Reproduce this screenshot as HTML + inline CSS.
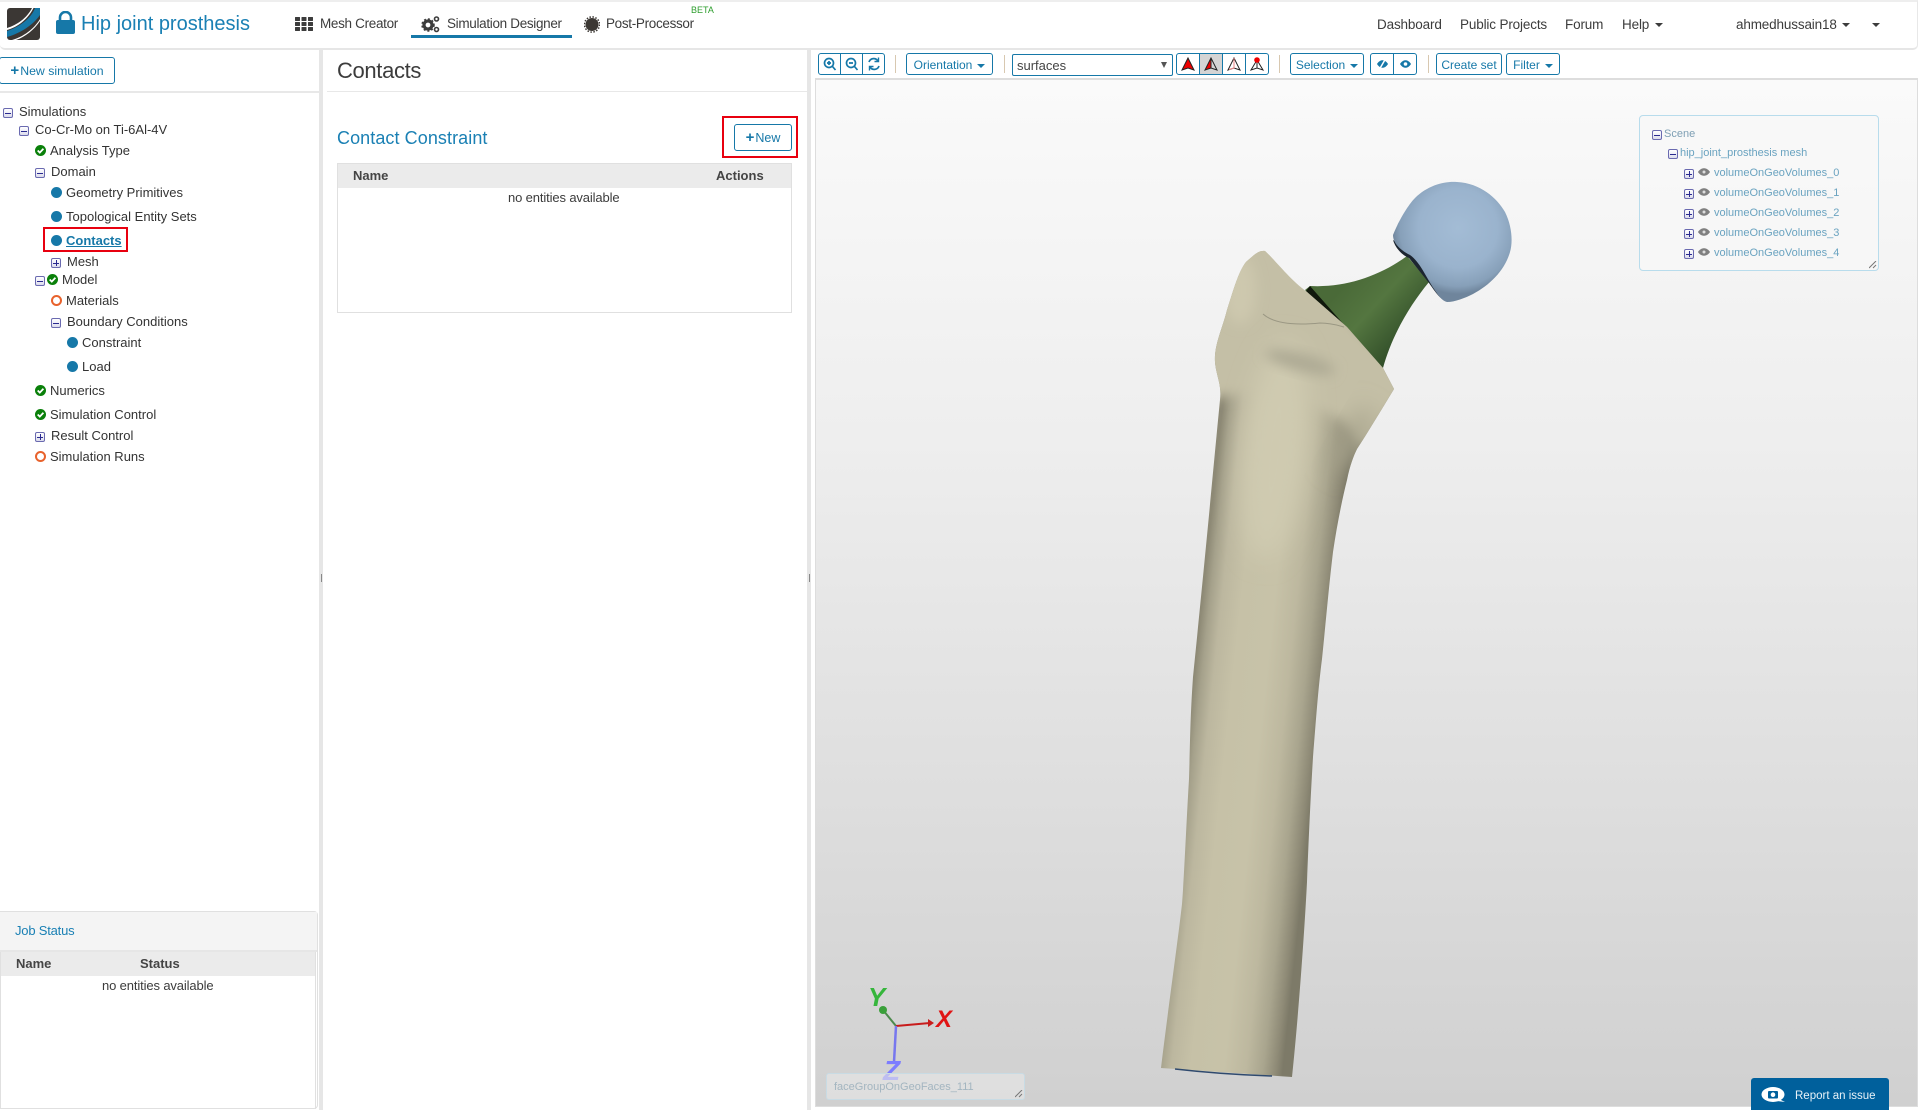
<!DOCTYPE html>
<html><head><meta charset="utf-8"><title>Hip joint prosthesis</title>
<style>
html,body{margin:0;padding:0;width:1919px;height:1110px;overflow:hidden;background:#fff;font-family:"Liberation Sans",sans-serif;color:#333}
.a{position:absolute}
.t{position:absolute;white-space:nowrap;line-height:16px;font-size:13px;color:#333}
.l{font-size:13.5px;letter-spacing:-.15px;color:#3c3c3c}
.n{letter-spacing:-.32px}
.exp{position:absolute;width:8px;height:8px;border:1px solid #6a6ab0;border-radius:2px;background:linear-gradient(#fff,#dcdcec)}
.exp:before{content:"";position:absolute;left:1px;right:1px;top:3.5px;height:1px;background:#2a2a90}
.exp.p:after{content:"";position:absolute;top:1px;bottom:1px;left:3.5px;width:1px;background:#2a2a90}
.blue{position:absolute;width:11px;height:11px;border-radius:50%;background:#1678a8}
.ring{position:absolute;width:7px;height:7px;border-radius:50%;border:2px solid #e8622c}
.chk{position:absolute;width:11px;height:11px}
.btn{position:absolute;box-sizing:border-box;border:1px solid #1678a8;border-radius:3px;background:#fff;color:#1678a8;font-size:12px;line-height:22px;text-align:center;white-space:nowrap}
.cell{position:absolute;top:0;bottom:0;border-right:1px solid #1678a8;box-sizing:border-box}
.sep{position:absolute;width:1px;top:55px;height:18px;background:#d8c8b0}
.caret{display:inline-block;width:0;height:0;border-left:4px solid transparent;border-right:4px solid transparent;border-top:4px solid currentColor;vertical-align:middle;margin-left:5px}
.s{position:absolute;white-space:nowrap;font-size:11px;line-height:14px;color:#6aa3c0}
</style></head><body>

<!-- header -->
<div class="a" style="left:0;top:0;width:1917px;height:46px;border:1px solid #e8e8e8;border-left:none;border-top:2px solid #eee;border-bottom:2px solid #e6e6e6;border-radius:0 0 5px 5px;background:#fff"></div>
<svg class="a" style="left:7px;top:8px" width="33" height="32" viewBox="0 0 33 32">
<rect width="33" height="32" rx="3" fill="#3b3734"/>
<path d="M0 23C12 19 24 11 28 0H33V7C26 17 14 25 0 29Z" fill="#1678a8"/>
<path d="M0 20C10 17 20 10 25 0H26.500C21 11 11 19 0 22Z" fill="#fff"/>
<path d="M5 32C16 29 27 21 33 11V13C27 22 18 29 9 32Z" fill="#fff"/>
</svg>
<svg class="a" style="left:56px;top:11px" width="19" height="23" viewBox="0 0 19 23"><path d="M4 10V6.500a5.500 5.500 0 0 1 11 0V10" fill="none" stroke="#1678a8" stroke-width="2.600"/><rect x="0" y="9" width="19" height="14" rx="2" fill="#1678a8"/></svg>
<div class="t" style="left:81px;top:13px;font-size:20px;line-height:22px;color:#1a80b4;letter-spacing:0">Hip joint prosthesis</div>
<svg class="a" style="left:295px;top:17px" width="18" height="14" fill="#3c3c3c"><rect width="5" height="4" rx=".5"/><rect x="6.500" width="5" height="4" rx=".5"/><rect x="13" width="5" height="4" rx=".5"/><rect y="5" width="5" height="4" rx=".5"/><rect x="6.500" y="5" width="5" height="4" rx=".5"/><rect x="13" y="5" width="5" height="4" rx=".5"/><rect y="10" width="5" height="4" rx=".5"/><rect x="6.500" y="10" width="5" height="4" rx=".5"/><rect x="13" y="10" width="5" height="4" rx=".5"/></svg>
<div class="t l n" style="left:320px;top:16px">Mesh Creator</div>
<svg class="a" style="left:421px;top:15px" width="19" height="18" fill="none" stroke="#3c3c3c"><circle cx="7" cy="10" r="4" stroke-width="3.200"/><circle cx="7" cy="10" r="6" stroke-width="1.500" stroke-dasharray="2 2"/><circle cx="15.500" cy="4" r="2" stroke-width="1.600"/><circle cx="15.500" cy="14.500" r="2" stroke-width="1.600"/></svg>
<div class="t l n" style="left:447px;top:16px">Simulation Designer</div>
<div class="a" style="left:411px;top:35px;width:161px;height:3px;background:#1678a8"></div>
<svg class="a" style="left:584px;top:16px" width="16" height="17"><circle cx="8" cy="8.500" r="6.500" fill="#3c3834"/><circle cx="8" cy="8.500" r="7.600" fill="none" stroke="#3c3834" stroke-width="1.500" stroke-dasharray="1.500 1.500"/></svg>
<div class="t l n" style="left:606px;top:16px">Post-Processor</div>
<div class="t" style="left:691px;top:2px;font-size:9px;color:#2e9e2e">BETA</div>

<div class="t l" style="left:1377px;top:17px">Dashboard</div>
<div class="t l" style="left:1460px;top:17px">Public Projects</div>
<div class="t l" style="left:1565px;top:17px">Forum</div>
<div class="t l" style="left:1622px;top:17px">Help <span class="caret" style="margin-left:2px"></span></div>
<div class="t l" style="left:1736px;top:17px">ahmedhussain18 <span class="caret" style="margin-left:2px"></span></div>
<div class="t l" style="left:1872px;top:17px"><span class="caret" style="margin-left:0"></span></div>

<!-- left panel -->
<div class="a" style="left:319px;top:50px;width:4px;height:1060px;background:#e6e6e6"></div>
<div class="a" style="left:321px;top:574px;width:1px;height:8px;background:#888"></div>
<div class="a" style="left:807px;top:50px;width:4px;height:1060px;background:#e6e6e6"></div>
<div class="a" style="left:809px;top:574px;width:1px;height:8px;background:#888"></div>
<div class="btn" style="left:-1px;top:57px;width:116px;height:27px;line-height:25px"><b style="font-size:15px;margin-right:1px">+</b><span style="font-size:12.300px">New simulation</span></div>
<div class="a" style="left:0;top:91px;width:319px;height:2px;background:#e8e8e8"></div>

<div class="exp" style="left:3px;top:108px"></div><div class="t" style="left:19px;top:104px">Simulations</div>
<div class="exp" style="left:19px;top:126px"></div><div class="t" style="left:35px;top:122px">Co-Cr-Mo on Ti-6Al-4V</div>
<svg class="chk" style="left:35px;top:145px" viewBox="0 0 11 11"><circle cx="5.500" cy="5.500" r="5.500" fill="#0a800a"/><path d="M2.700 5.500L4.800 7.600L8.400 3.800" fill="none" stroke="#fff" stroke-width="1.800"/></svg><div class="t" style="left:50px;top:143px">Analysis Type</div>
<div class="exp" style="left:35px;top:168px"></div><div class="t" style="left:51px;top:164px">Domain</div>
<div class="blue" style="left:51px;top:187px"></div><div class="t" style="left:66px;top:185px">Geometry Primitives</div>
<div class="blue" style="left:51px;top:211px"></div><div class="t" style="left:66px;top:209px">Topological Entity Sets</div>
<div class="blue" style="left:51px;top:235px"></div><div class="t" style="left:66px;top:233px;font-weight:bold;color:#1678a8;text-decoration:underline">Contacts</div>
<div class="exp p" style="left:51px;top:258px"></div><div class="t" style="left:67px;top:254px">Mesh</div>
<div class="exp" style="left:35px;top:276px"></div><svg class="chk" style="left:47px;top:274px" viewBox="0 0 11 11"><circle cx="5.500" cy="5.500" r="5.500" fill="#0a800a"/><path d="M2.700 5.500L4.800 7.600L8.400 3.800" fill="none" stroke="#fff" stroke-width="1.800"/></svg><div class="t" style="left:62px;top:272px">Model</div>
<div class="ring" style="left:51px;top:295px"></div><div class="t" style="left:66px;top:293px">Materials</div>
<div class="exp" style="left:51px;top:318px"></div><div class="t" style="left:67px;top:314px">Boundary Conditions</div>
<div class="blue" style="left:67px;top:337px"></div><div class="t" style="left:82px;top:335px">Constraint</div>
<div class="blue" style="left:67px;top:361px"></div><div class="t" style="left:82px;top:359px">Load</div>
<svg class="chk" style="left:35px;top:385px" viewBox="0 0 11 11"><circle cx="5.500" cy="5.500" r="5.500" fill="#0a800a"/><path d="M2.700 5.500L4.800 7.600L8.400 3.800" fill="none" stroke="#fff" stroke-width="1.800"/></svg><div class="t" style="left:50px;top:383px">Numerics</div>
<svg class="chk" style="left:35px;top:409px" viewBox="0 0 11 11"><circle cx="5.500" cy="5.500" r="5.500" fill="#0a800a"/><path d="M2.700 5.500L4.800 7.600L8.400 3.800" fill="none" stroke="#fff" stroke-width="1.800"/></svg><div class="t" style="left:50px;top:407px">Simulation Control</div>
<div class="exp p" style="left:35px;top:432px"></div><div class="t" style="left:51px;top:428px">Result Control</div>
<div class="ring" style="left:35px;top:451px"></div><div class="t" style="left:50px;top:449px">Simulation Runs</div>
<div class="a" style="left:43px;top:227px;width:81px;height:21px;border:2px solid #e8000f"></div>

<!-- job status -->
<div class="a" style="left:0;top:911px;width:318px;height:198px;border:1px solid #e0e0e0;border-left:none;border-radius:0 4px 4px 0;box-sizing:border-box;background:#fff"></div>
<div class="a" style="left:0;top:912px;width:317px;height:38px;background:#f4f4f4;border-bottom:2px solid #e6e6e6"></div>
<div class="t" style="left:15px;top:923px;font-size:13px;letter-spacing:-.2px;color:#1a80b4">Job Status</div>
<div class="a" style="left:1px;top:952px;width:314px;height:24px;background:#ebebeb"></div>
<div class="a" style="left:315px;top:952px;width:1px;height:157px;background:#e0e0e0"></div>
<div class="a" style="left:0;top:952px;width:1px;height:157px;background:#e0e0e0"></div>
<div class="t" style="left:16px;top:956px;font-weight:bold;color:#444">Name</div>
<div class="t" style="left:140px;top:956px;font-weight:bold;color:#444">Status</div>
<div class="t" style="left:102px;top:978px;font-size:13px;letter-spacing:-.13px;color:#3c3c3c">no entities available</div>

<!-- center panel -->
<div class="t" style="left:337px;top:58px;font-size:22px;line-height:26px;letter-spacing:-.35px;color:#3c3c3c">Contacts</div>
<div class="a" style="left:327px;top:91px;width:480px;height:1px;background:#e8e8e8"></div>
<div class="t" style="left:337px;top:127px;font-size:18px;line-height:22px;letter-spacing:.08px;color:#1a80b4">Contact Constraint</div>
<div class="a" style="left:722px;top:116px;width:72px;height:38px;border:2px solid #e8000f"></div>
<div class="btn" style="left:734px;top:124px;width:58px;height:27px;line-height:25px"><b style="font-size:15px;margin-right:1px">+</b><span style="font-size:12.500px">New</span></div>
<div class="a" style="left:337px;top:163px;width:453px;height:148px;border:1px solid #e0e0e0"></div>
<div class="a" style="left:338px;top:164px;width:453px;height:24px;background:#ebebeb"></div>
<div class="t" style="left:353px;top:168px;font-weight:bold;color:#444">Name</div>
<div class="t" style="left:716px;top:168px;font-weight:bold;color:#444">Actions</div>
<div class="t" style="left:508px;top:190px;font-size:13px;letter-spacing:-.13px;color:#3c3c3c">no entities available</div>

<!-- toolbar -->
<div class="btn" style="left:818px;top:53px;width:67px;height:22px">
<div class="cell" style="left:0;width:22px"></div><div class="cell" style="left:22px;width:22px"></div>
<svg class="a" style="left:0;top:0" width="65" height="20" fill="none" stroke="#1678a8" stroke-width="1.700"><circle cx="10" cy="9" r="4.500"/><path d="M13.500 12.500L16.500 16M8 9H12M10 7V11M30 9H34"/><circle cx="32" cy="9" r="4.500"/><path d="M35.500 12.500L38.500 16M50 8A5 5 0 0 1 59 7M60 12A5 5 0 0 1 51 13"/><path d="M59.500 3.500V7.500H55.500M50.500 16.500V12.500H54.500" stroke-width="1.400"/></svg></div>
<div class="sep" style="left:895px"></div>
<div class="btn" style="left:906px;top:53px;width:87px;height:22px">Orientation<span class="caret"></span></div>
<div class="sep" style="left:1004px"></div>
<div class="a" style="left:1012px;top:54px;width:159px;height:20px;border:1px solid #1678a8;border-radius:2px;font-size:13px;line-height:21px;text-indent:4px;color:#444">surfaces<span class="a" style="right:5px;top:7px;border-left:3.500px solid transparent;border-right:3.500px solid transparent;border-top:6px solid #555"></span></div>
<div class="btn" style="left:1176px;top:53px;width:93px;height:22px;overflow:hidden">
<div class="cell" style="left:0;width:23px"></div><div class="cell" style="left:23px;width:23px;background:#d4d4d4"></div><div class="cell" style="left:46px;width:23px"></div>
<svg class="a" style="left:0;top:0" width="91" height="20"><path d="M11 4L5 16L11 14L17 16Z" fill="#e00" stroke="#222"/><path d="M34 4L28 16L34 14Z" fill="#e00"/><path d="M34 4L28 16L34 14L40 16ZM34 4V14" fill="none" stroke="#222"/><path d="M57 4L51 16L57 14L63 16ZM57 4V14" fill="none" stroke="#222"/><path d="M57 4V14L52 15.500" fill="none" stroke="#e88" /><path d="M80 6L74 16L80 14L86 16ZM80 6V14" fill="none" stroke="#222"/><circle cx="80" cy="6" r="2.800" fill="#e00"/></svg></div>
<div class="sep" style="left:1279px"></div>
<div class="btn" style="left:1290px;top:53px;width:74px;height:22px">Selection<span class="caret"></span></div>
<div class="btn" style="left:1370px;top:53px;width:47px;height:22px"><div class="cell" style="left:0;width:23px"></div>
<svg class="a" style="left:0;top:0" width="45" height="20"><path d="M6 10C9 5 14 5 17 10C14 15 9 15 6 10Z" fill="#1678a8"/><path d="M8 16L15 4" stroke="#fff" stroke-width="1.500"/><path d="M29 10C32 5 37 5 40 10C37 15 32 15 29 10Z" fill="#1678a8"/><circle cx="34.500" cy="10" r="1.800" fill="#fff"/></svg></div>
<div class="sep" style="left:1428px"></div>
<div class="btn" style="left:1436px;top:53px;width:66px;height:22px">Create set</div>
<div class="btn" style="left:1506px;top:53px;width:54px;height:22px">Filter<span class="caret"></span></div>

<!-- viewer -->
<div class="a" style="left:815px;top:78px;width:1103px;height:1029px;box-sizing:border-box;border:1px solid #ddd;border-top:2px solid #ddd;background:linear-gradient(#fafafa 0%,#eeeeee 35%,#d0d0d0 100%)"></div>

<svg class="a" style="left:0;top:0" width="1919" height="1110" viewBox="0 0 1919 1110">
<defs>
<linearGradient id="sh" gradientUnits="userSpaceOnUse" x1="1188" y1="729" x2="1318" y2="743">
<stop offset="0" stop-color="#8d8975"/><stop offset=".06" stop-color="#a5a18b"/><stop offset=".15" stop-color="#bcb79f"/><stop offset=".3" stop-color="#c6c1a7"/><stop offset=".55" stop-color="#c7c2a8"/><stop offset=".72" stop-color="#bdb89f"/><stop offset=".85" stop-color="#a9a58e"/><stop offset=".95" stop-color="#8e8a76"/><stop offset="1" stop-color="#7d7a68"/>
</linearGradient>
<radialGradient id="ball" gradientUnits="userSpaceOnUse" cx="1458" cy="228" r="66">
<stop offset="0" stop-color="#a3bcd5"/><stop offset=".6" stop-color="#9ab3cd"/><stop offset=".88" stop-color="#87a0b9"/><stop offset="1" stop-color="#6f859c"/>
</radialGradient>
<linearGradient id="neck" gradientUnits="userSpaceOnUse" x1="1340" y1="290" x2="1400" y2="345">
<stop offset="0" stop-color="#4a6a38"/><stop offset=".45" stop-color="#547640"/><stop offset="1" stop-color="#33502a"/>
</linearGradient>
<filter id="b12" x="-50%" y="-50%" width="200%" height="200%"><feGaussianBlur stdDeviation="12"/></filter>
<filter id="b6" x="-50%" y="-50%" width="200%" height="200%"><feGaussianBlur stdDeviation="6"/></filter>
<clipPath id="bone"><path d="M1265 251C1258 250 1253 256 1246 262C1238 272 1232 295 1227 310C1222 330 1214 345 1215 362C1216 375 1222 385 1220 400C1216 440 1206 550 1193 677C1190 720 1190 750 1189 779C1186 830 1184 880 1182 904C1178 940 1168 1010 1161 1068L1292 1077C1298 1020 1304 940 1307 882C1309 830 1311 790 1313 757C1316 720 1318 690 1322 659C1326 620 1329 585 1333 552C1337 525 1342 500 1347 480C1350 465 1354 455 1357 449C1368 432 1380 412 1394 389L1383 368L1347 327L1307 292C1290 280 1275 260 1265 251Z"/></clipPath>
</defs>
<!-- neck -->
<path d="M1305 290L1310 286C1345 288 1380 276 1407 256L1429 282C1410 305 1392 335 1383 368Z" fill="url(#neck)"/>
<path d="M1310 286L1368 352L1364 352L1306 291Z" fill="#10180c"/>
<path d="M1306 292L1362 352L1381 369L1347 327Z" fill="#4a6a38"/>
<!-- ball -->
<path d="M1393 240C1396 250 1404 256 1409 258L1429 283C1434 290 1440 300 1448 302L1436 290L1410 250Z" fill="#1c2530"/>
<path d="M1393 235C1398 222 1408 205 1415 198C1428 185 1445 181 1457 182C1480 183 1497 198 1505 212C1512 226 1513 242 1510 252C1505 270 1490 285 1473 294C1465 298 1455 302 1447 302C1442 301 1438 295 1434 289C1426 277 1420 262 1410 255C1400 250 1393 243 1393 235Z" fill="url(#ball)"/>
<!-- bone -->
<path d="M1265 251C1258 250 1253 256 1246 262C1238 272 1232 295 1227 310C1222 330 1214 345 1215 362C1216 375 1222 385 1220 400C1216 440 1206 550 1193 677C1190 720 1190 750 1189 779C1186 830 1184 880 1182 904C1178 940 1168 1010 1161 1068L1292 1077C1298 1020 1304 940 1307 882C1309 830 1311 790 1313 757C1316 720 1318 690 1322 659C1326 620 1329 585 1333 552C1337 525 1342 500 1347 480C1350 465 1354 455 1357 449C1368 432 1380 412 1394 389L1383 368L1347 327L1307 292C1290 280 1275 260 1265 251Z" fill="url(#sh)"/>
<g clip-path="url(#bone)">
<path d="M1200 270L1270 235L1305 280L1400 365L1405 395L1365 450L1340 420L1280 390L1195 400Z" fill="#c4bfa6" filter="url(#b6)"/>
<ellipse cx="1275" cy="450" rx="32" ry="110" fill="#cfcab0" filter="url(#b12)" transform="rotate(6 1275 450)"/>
<ellipse cx="1240" cy="290" rx="16" ry="34" fill="#cdc8ae" filter="url(#b6)"/>
<ellipse cx="1300" cy="362" rx="36" ry="9" fill="#aeaa94" filter="url(#b6)" transform="rotate(15 1300 362)"/>
<ellipse cx="1352" cy="440" rx="12" ry="36" fill="#a8a48d" filter="url(#b12)" transform="rotate(30 1352 440)"/>
<path d="M1263 314C1272 322 1290 326 1320 323C1332 323 1340 326 1344 327" fill="none" stroke="#9a9783" stroke-width="1"/>
</g>
<path d="M1175 1069C1210 1073 1240 1075 1272 1076" fill="none" stroke="#2f4a6e" stroke-width="1.500"/>
<!-- axis -->
<path d="M896 1026L883 1010" stroke="#4d8a4d" stroke-width="2"/><circle cx="883" cy="1010" r="4" fill="#3aa03a"/>
<path d="M896 1026L930 1023" stroke="#c81c1c" stroke-width="2"/><path d="M934 1023L928 1019V1027Z" fill="#c81c1c"/>
<path d="M896 1026L894 1062" stroke="#7777ee" stroke-width="2.500"/>
<text x="868" y="1006" font-family="Liberation Sans" font-weight="bold" font-style="italic" font-size="26" fill="#36b63c">Y</text>
<text x="936" y="1027" font-family="Liberation Sans" font-weight="bold" font-style="italic" font-size="24" fill="#e01414">X</text>
<text x="883" y="1080" font-family="Liberation Sans" font-weight="bold" font-style="italic" font-size="28" fill="#7d7dff">Z</text>
</svg>

<!-- scene panel -->
<div class="a" style="left:1639px;top:115px;width:238px;height:154px;border:1px solid #b8dcec;border-radius:4px;background:rgba(248,248,248,.7)"></div>
<svg class="a" style="left:1869px;top:261px" width="8" height="8" stroke="#777"><path d="M0 7L7 0M4 7L7 4"/></svg>
<div class="exp" style="left:1652px;top:130px"></div><div class="s" style="left:1664px;top:127px;color:#7e9fb4">Scene</div>
<div class="exp" style="left:1668px;top:149px"></div><div class="s" style="left:1680px;top:146px">hip_joint_prosthesis mesh</div>
<div class="exp p" style="left:1684px;top:169px"></div><div class="s" style="left:1714px;top:166px">volumeOnGeoVolumes_0</div>
<div class="exp p" style="left:1684px;top:189px"></div><div class="s" style="left:1714px;top:186px">volumeOnGeoVolumes_1</div>
<div class="exp p" style="left:1684px;top:209px"></div><div class="s" style="left:1714px;top:206px">volumeOnGeoVolumes_2</div>
<div class="exp p" style="left:1684px;top:229px"></div><div class="s" style="left:1714px;top:226px">volumeOnGeoVolumes_3</div>
<div class="exp p" style="left:1684px;top:249px"></div><div class="s" style="left:1714px;top:246px">volumeOnGeoVolumes_4</div>
<svg class="a" style="left:1698px;top:167px" width="12" height="100" fill="#808080"><g><path d="M0 5C3 0 9 0 12 5C9 10 3 10 0 5Z"/><circle cx="6" cy="5" r="1.500" fill="#ddd"/></g><g transform="translate(0 20)"><path d="M0 5C3 0 9 0 12 5C9 10 3 10 0 5Z"/><circle cx="6" cy="5" r="1.500" fill="#ddd"/></g><g transform="translate(0 40)"><path d="M0 5C3 0 9 0 12 5C9 10 3 10 0 5Z"/><circle cx="6" cy="5" r="1.500" fill="#ddd"/></g><g transform="translate(0 60)"><path d="M0 5C3 0 9 0 12 5C9 10 3 10 0 5Z"/><circle cx="6" cy="5" r="1.500" fill="#ddd"/></g><g transform="translate(0 80)"><path d="M0 5C3 0 9 0 12 5C9 10 3 10 0 5Z"/><circle cx="6" cy="5" r="1.500" fill="#ddd"/></g></svg>

<!-- face group box -->
<div class="a" style="left:826px;top:1073px;width:197px;height:25px;border:1px solid #c8dbe4;border-radius:3px;background:rgba(232,232,232,.6)"></div>
<div class="s" style="left:834px;top:1080px;color:#a3b5c0">faceGroupOnGeoFaces_111</div>
<svg class="a" style="left:1015px;top:1090px" width="8" height="8" stroke="#777"><path d="M0 7L7 0M4 7L7 4"/></svg>

<!-- report -->
<div class="a" style="left:1751px;top:1078px;width:138px;height:32px;background:#00609c;border-radius:3px 3px 0 0"></div>
<svg class="a" style="left:1761px;top:1087px" width="25" height="16"><ellipse cx="12" cy="7.500" rx="11.500" ry="7.500" fill="#fff"/><path d="M18 12L24 15L16 14Z" fill="#fff"/><rect x="7" y="4" width="10" height="7.500" rx="1" fill="#00609c"/><circle cx="12" cy="7.700" r="2.300" fill="#fff"/></svg>
<div class="t" style="left:1795px;top:1088px;font-size:11.500px;color:#e8f2f8">Report an issue</div>
</body></html>
